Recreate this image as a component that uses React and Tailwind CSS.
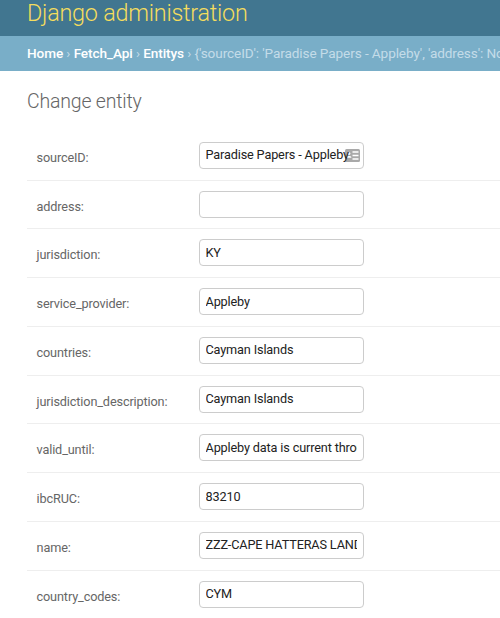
const fields = [
  ['sourceID', 'Paradise Papers - Appleby'],
  ['address', ''],
  ['jurisdiction', 'KY'],
  ['service_provider', 'Appleby'],
  ['countries', 'Cayman Islands'],
  ['jurisdiction_description', 'Cayman Islands'],
  ['valid_until', 'Appleby data is current through 2014'],
  ['ibcRUC', '83210'],
  ['name', 'ZZZ-CAPE HATTERAS LAND LTD.'],
  ['country_codes', 'CYM'],
];

function ContactIcon() {
  return (
    <svg className="absolute top-[7px] right-[4px] h-[13px] w-[15px]" viewBox="0 0 15 13">
      <rect width="15" height="13" rx="1.5" fill="#a9a9a9" />
      <circle cx="3.9" cy="4.5" r="1.5" fill="#fff" />
      <path d="M1.5 8.8V8c0-1.5 4.8-1.5 4.8 0v.8z" fill="#fff" />
      <path d="M7.5 3h6M7.5 6.5h6M7.5 10h6" stroke="#fff" strokeWidth="1.3" />
    </svg>
  );
}

function Field({ name, value, withIcon }) {
  return (
    <div className="flex h-[48.78px] items-start border-b border-[#eeeeee] pt-[10px] pl-[9.5px]">
      <label className="w-[162.5px] shrink-0 pt-[7px] text-[12.7px] leading-[18px] tracking-[-0.13px] text-[#666666]" htmlFor={name}>
        {name}:
      </label>
      <div className="relative h-[27px] w-[165px]">
        {withIcon && <ContactIcon />}
        <input
          id={name}
          type="text"
          defaultValue={value}
          className="relative block h-[27px] w-full rounded-[4px] border border-[#cccccc] bg-transparent pr-[6px] pb-px pl-[5.5px] text-[12.7px] tracking-[-0.15px] text-[#222222] outline-none"
        />
      </div>
    </div>
  );
}

export default function App() {
  return (
    <div className="h-[618px] w-[500px] overflow-hidden bg-white font-[Roboto,sans-serif]">
      <header className="h-[36px] bg-[#417690] pl-[27px]">
        <h1 className="text-[23.4px] leading-[26px] font-light tracking-[-0.24px] text-[#f5dd5d]">Django administration</h1>
      </header>
      <nav className="h-[35px] overflow-hidden bg-[#79aec8] pl-[27px] text-[13.6px] leading-[35px] tracking-[-0.1px] whitespace-nowrap text-[#c4dce8]">
        <a className="font-medium text-white">Home</a> › <a className="font-medium text-white">Fetch_Api</a> ›{' '}
        <a className="font-medium text-white">Entitys</a> › {"{'sourceID': 'Paradise Papers - Appleby', 'address': None, 'jurisdiction': 'KY'}"}
      </nav>
      <main className="pl-[27px]">
        <h2 className="h-[60.8px] pt-[19px] text-[19.5px] leading-[24px] font-light tracking-[-0.2px] text-[#666666]">Change entity</h2>
        <form>
          {fields.map(([name, value], i) => (
            <Field key={name} name={name} value={value} withIcon={i === 0} />
          ))}
        </form>
      </main>
    </div>
  );
}
